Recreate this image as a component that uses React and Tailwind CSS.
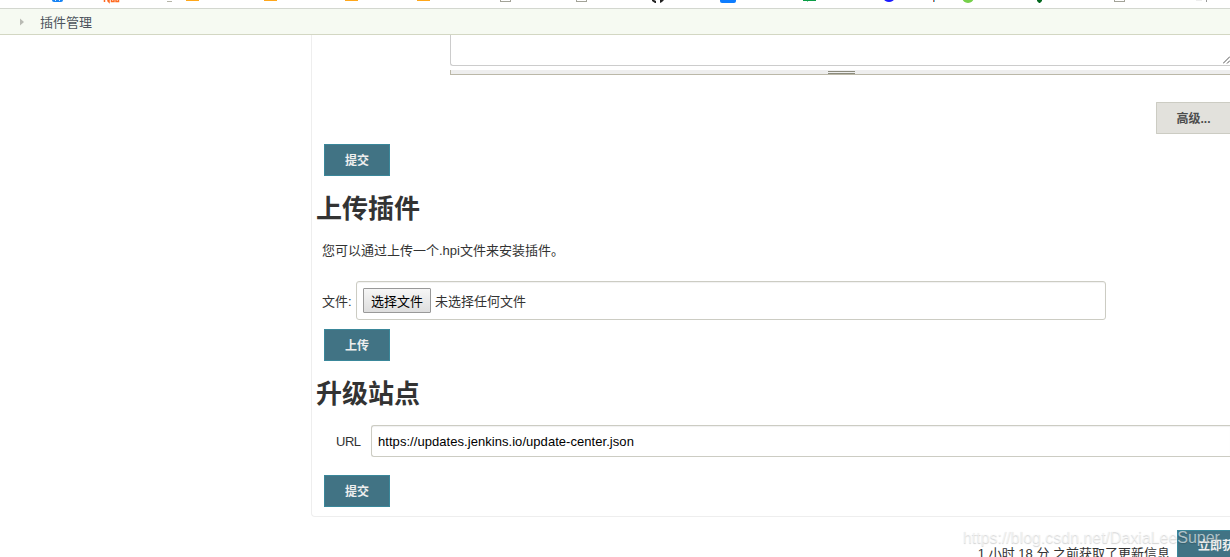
import React from 'react';

// bottom edge of the bookmarks bar icons
function BookmarksBar() {
  return (
    <svg className="block h-2 w-full shrink-0" width="1230" height="8" viewBox="0 0 1230 8">
      <rect x="52" y="-6" width="11" height="8" rx="2" fill="#1583f5" />
      <path d="M55 .5h1M59 .5h1" stroke="#cfe6ff" />
      <path d="M104.5 0v2M108 0v1l1 1V0M111.5 0v1.5h2.5V0M116 0v1.5h2.5V0" stroke="#ff6a20" strokeWidth="1.5" fill="none" />
      <path d="M167 1.5h5" stroke="#b5b5a8" />
      <g fill="#ffa71a">
        <rect x="186" y="0" width="13" height="1" />
        <rect x="264" y="0" width="13" height="1" />
        <rect x="345" y="0" width="13" height="1" />
        <rect x="417" y="0" width="13" height="1" />
      </g>
      <g fill="none" stroke="#a3a398">
        <rect x="500.5" y="-8.5" width="10" height="10" />
        <rect x="576.5" y="-8.5" width="10" height="10" />
        <rect x="1114.5" y="-8.5" width="10" height="10" />
      </g>
      <path d="M652 0h2l2 1v2h-1l-3-2zM660 0h4l-2 2-2 1z" fill="#222" />
      <rect x="720" y="-10" width="16" height="13" rx="2" fill="#0d7dff" />
      <path d="M803 .5h13" stroke="#0a9d45" />
      <path d="M807 1.5h1" stroke="#8fd0a8" />
      <ellipse cx="889" cy="-1" rx="5" ry="3" fill="#1a1aff" />
      <path d="M933.5 0v2" stroke="#d2653a" />
      <path d="M934.5 0v2" stroke="#51b9f0" />
      <circle cx="968" cy="-3" r="6" fill="#76d04a" />
      <path d="M1037 0h5v1l-2 2h-1l-2-2z" fill="#04681f" />
      <path d="M1196 .5h6" stroke="#eee" />
      <path d="M1206.5 0v2" stroke="#999" />
    </svg>
  );
}

function Breadcrumb() {
  return (
    <div className="flex h-[27px] shrink-0 items-center border-y border-t-[#d3d7cf] border-b-[#d3d7c3] bg-[#f6faf2] pl-5">
      <svg className="h-2 w-4" width="16" height="8" viewBox="0 0 16 8">
        <path d="M0 .5v7l4-3.5z" fill="#b9bbb4" />
      </svg>
      <span className="pt-0.5 pl-1 text-[#4d545d]">插件管理</span>
    </div>
  );
}

function Button({ children }) {
  return (
    <button className="ml-3 block h-8 w-[66px] border border-[#3a879a] bg-[#417384] pt-px text-xs font-bold text-[#eee]">
      {children}
    </button>
  );
}

function Heading({ children }) {
  return <h1 className="ml-1 text-[26px] leading-8 font-bold text-[#333]">{children}</h1>;
}

function NoProxyField() {
  return (
    <div className="ml-[138px]">
      <div className="relative h-[31px] rounded-bl-[3px] border-b border-l border-[#ccc]">
        <svg className="absolute right-0 bottom-px h-2 w-[7px]" width="7" height="8" viewBox="0 0 7 8">
          <path d="M0 7.5L7 .5M4 7.5l3-3" stroke="#555" fill="none" />
        </svg>
      </div>
      <div className="mt-1 h-[5px] border-b border-l border-[#bbb8a8] bg-[#eee] pl-[377px]">
        <div className="h-[3px] w-[27px] translate-y-px border-y border-[#8b8b7d]" />
      </div>
    </div>
  );
}

function UploadForm() {
  return (
    <div className="ml-2.5">
      <p className="mt-4 h-5 leading-5">您可以通过上传一个.hpi文件来安装插件。</p>
      <div className="mt-5 flex items-center">
        <span className="w-[34px] pt-0.5">文件:</span>
        <div className="flex h-[39px] w-[750px] items-center rounded-[3px] border border-[#ccccc3] pl-1.5 shadow-[inset_0_1px_1px_rgba(0,0,0,0.06)]">
          <button className="h-[25px] w-[68px] rounded-[1px] border border-[#999] bg-linear-to-b from-[#f6f6f6] to-[#dedede] pt-0.5 text-black">
            选择文件
          </button>
          <span className="ml-1 pt-0.5">未选择任何文件</span>
        </div>
      </div>
    </div>
  );
}

function App() {
  return (
    <div className="flex h-[557px] w-[1230px] flex-col overflow-hidden bg-white font-['Liberation_Sans','Noto_Sans_CJK_SC',sans-serif] text-[13px] leading-5 text-[#333]">
      <BookmarksBar />
      <Breadcrumb />
      <main className="ml-[311px] h-[482px] shrink-0 rounded-bl-[4px] border-b border-l border-[#eee]">
        <NoProxyField />
        <div className="mt-[27px] flex justify-end">
          <button className="h-8 w-[74px] rounded-l-[1px] border border-r-0 border-[#ccccc3] bg-[#e2e1dc] pt-px text-xs font-bold text-[#4d4d4d]">
            高级...
          </button>
        </div>
        <div className="mt-2.5">
          <Button>提交</Button>
        </div>
        <div className="mt-[17px]">
          <Heading>上传插件</Heading>
          <UploadForm />
          <div className="mt-[9px]">
            <Button>上传</Button>
          </div>
        </div>
        <div className="mt-[17px]">
          <Heading>升级站点</Heading>
          <div className="mt-[15px] mb-[18px] ml-6 flex items-center">
            <span className="w-[35px] pt-px tracking-[-0.5px]">URL</span>
            <input
              className="h-8 min-w-0 flex-1 rounded-l-[3px] border border-r-0 border-[#ccccc3] px-1.5 tracking-[0.05px] text-black shadow-[inset_0_1px_1px_rgba(0,0,0,0.06)] outline-none"
              defaultValue="https://updates.jenkins.io/update-center.json"
            />
          </div>
          <Button>提交</Button>
        </div>
      </main>
      <footer className="relative mt-[13px] flex h-[27px] justify-end overflow-hidden">
        <span className="mt-3.5 mr-[7px] whitespace-pre">1 小时 18 分 之前获取了更新信息</span>
        <div className="h-8 w-[53px] shrink-0 overflow-hidden border border-r-0 border-[#3a879a] bg-[#417384] pl-5 text-xs leading-[30px] font-bold whitespace-nowrap text-[#eee]">
          立即获取
        </div>
        <span className="absolute -top-px left-[963px] text-base leading-[18px] tracking-[-0.03px] whitespace-nowrap text-white/60 [text-shadow:0_1px_1px_rgba(0,0,0,0.18)]">
          https://blog.csdn.net/DaxiaLeeSuper
        </span>
      </footer>
    </div>
  );
}

export default App;
